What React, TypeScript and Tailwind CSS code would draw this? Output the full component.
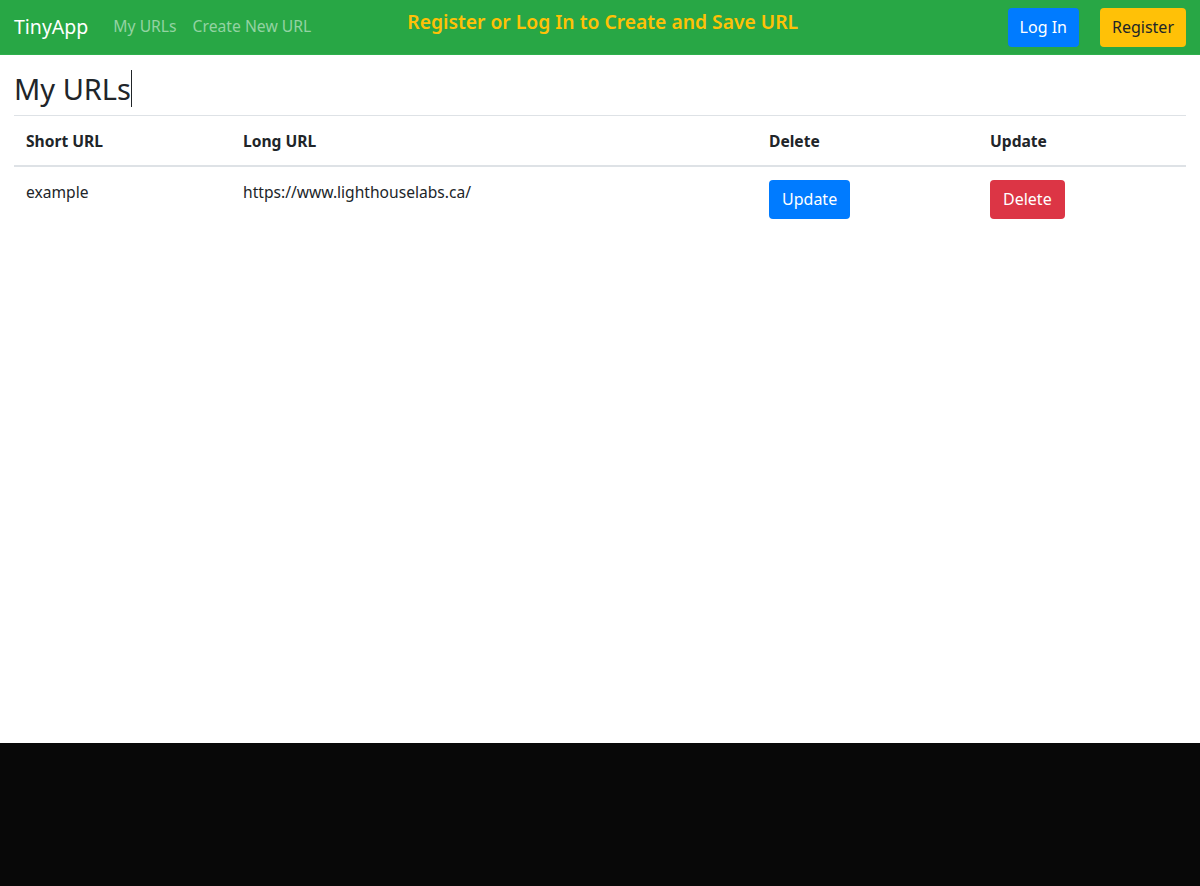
const font = { fontFamily: '"Noto Sans", "Open Sans", sans-serif' }

const rows = [{ short: "example", long: "https://www.lighthouselabs.ca/" }]

export default function App() {
  return (
    <div className="flex flex-col h-[886px] bg-[#080808] text-[#212529]" style={font}>
      <div className="flex-1 flex flex-col bg-white">
        <nav className="flex items-center h-[55px] px-[14px] bg-[#28a745] border-b border-[#2fb04d]">
          <span className="text-[19.5px] text-white mr-[25px]">TinyApp</span>
          <a className="text-[15.7px] text-[#93d3a2] mr-[16px]">My URLs</a>
          <a className="text-[15.7px] text-[#93d3a2]">Create New URL</a>
          <span className="ml-[96px] mb-[9px] text-[19.3px] font-semibold text-[#ffc107]">
            Register or Log In to Create and Save URL
          </span>
          <div className="ml-auto flex items-center gap-[21px]">
            <button className="h-[39px] px-[12px] rounded-[4px] bg-[#007bff] text-white text-[16px]">
              Log In
            </button>
            <button className="h-[39px] px-[12px] rounded-[4px] bg-[#ffc107] text-[#212529] text-[16px]">
              Register
            </button>
          </div>
        </nav>

        <main className="px-[14px]">
          <h1 className="flex items-center h-[60px] text-[29px] leading-none pt-[6px]">
            My URLs<span className="inline-block w-px h-[37px] bg-[#212529]" />
          </h1>
          <table className="w-full text-[15.6px] border-collapse">
            <thead>
              <tr className="border-t border-[#dee2e6] border-b-2 text-left">
                <th className="w-[217px] px-[12px] h-[50px] pt-[2px] font-bold">Short URL</th>
                <th className="w-[526px] px-[12px] pt-[2px] font-bold">Long URL</th>
                <th className="w-[221px] px-[12px] pt-[2px] font-bold">Delete</th>
                <th className="px-[12px] pt-[2px] font-bold">Update</th>
              </tr>
            </thead>
            <tbody>
              {rows.map((r) => (
                <tr key={r.short} className="align-top">
                  <td className="px-[12px] pt-[14px]">{r.short}</td>
                  <td className="px-[12px] pt-[14px]">{r.long}</td>
                  <td className="px-[12px] pt-[13px]">
                    <button className="h-[39px] px-[13px] rounded-[4px] bg-[#007bff] text-white text-[16px]">
                      Update
                    </button>
                  </td>
                  <td className="px-[12px] pt-[13px]">
                    <button className="h-[39px] px-[13px] rounded-[4px] bg-[#dc3545] text-white text-[16px]">
                      Delete
                    </button>
                  </td>
                </tr>
              ))}
            </tbody>
          </table>
        </main>
      </div>
      <div className="h-[143px]" />
    </div>
  )
}
